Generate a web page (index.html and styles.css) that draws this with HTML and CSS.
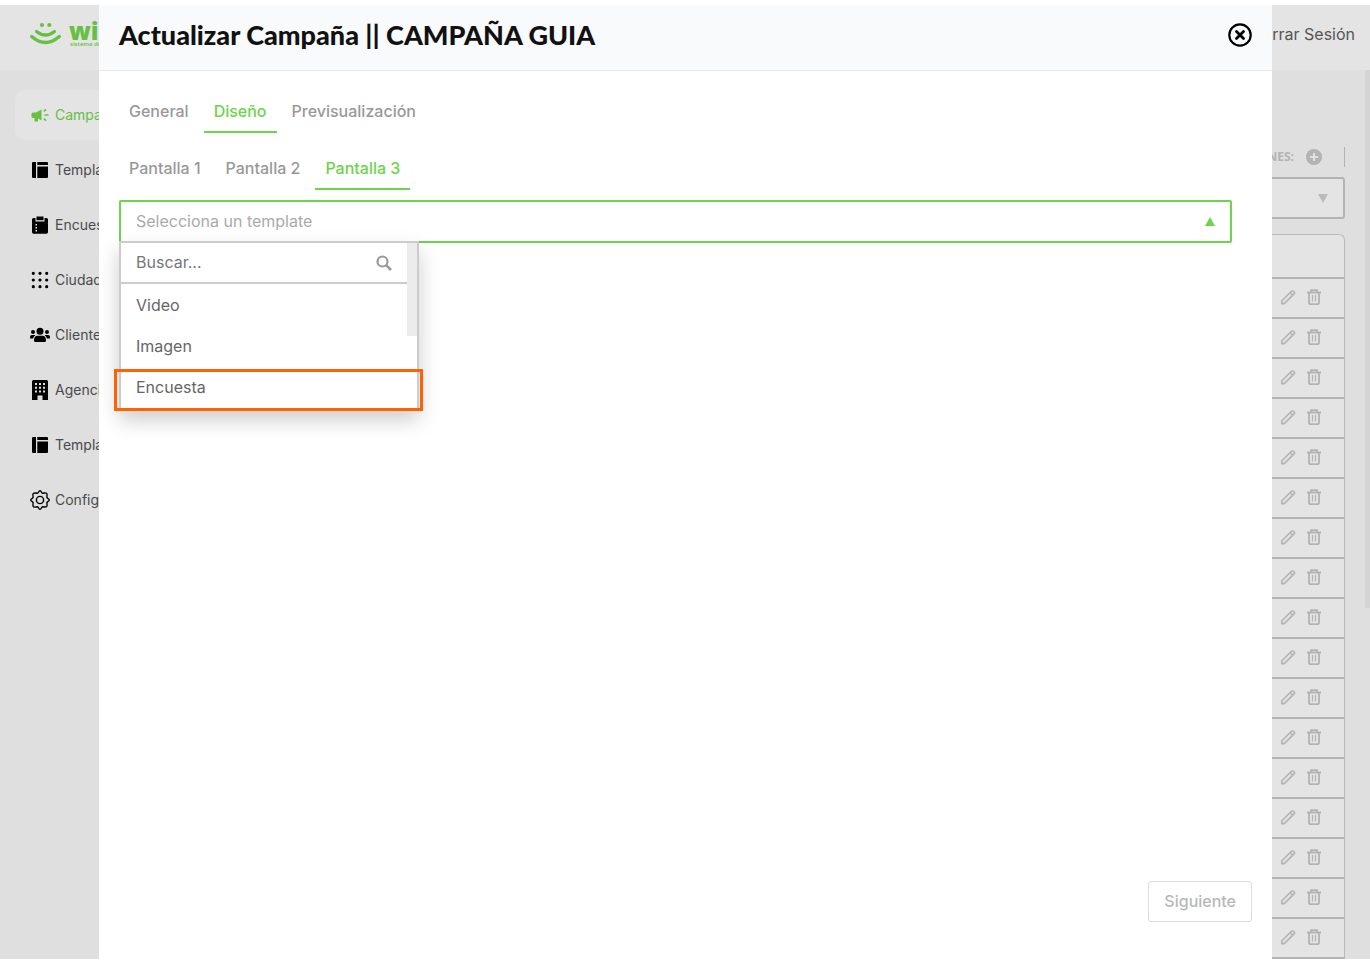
FILE: index.html
```html
<!DOCTYPE html>
<html lang="es">
<head>
<meta charset="utf-8">
<title>Actualizar Campaña</title>
<link rel="stylesheet" href="styles.css">
</head>
<body>
<svg class="sprite" aria-hidden="true">
  <symbol id="i-template" viewBox="0 0 20 20"><path d="M2 3Q2 2 3 2H6V18H3Q2 18 2 17ZM7.300 2H17Q18 2 18 3V5H7.300ZM7.300 6.500H18V17Q18 18 17 18H7.300Z"/></symbol>
  <symbol id="i-pencil" viewBox="0 0 16 16"><path d="M1.700 14.600V12L11.700 2Q12.300 1.400 12.900 2L14.300 3.400Q14.900 4 14.300 4.600L4.300 14.600ZM10 3.700L12.600 6.300" fill="none" stroke="currentColor" stroke-width="1.600" stroke-linejoin="round"/></symbol>
  <symbol id="i-trash" viewBox="0 0 16 16"><path d="M1 3.500H15M5 3V1.200H11V3M3 3.500V13.500Q3 15.200 4.700 15.200H11.300Q13 15.200 13 13.500V3.500" fill="none" stroke="currentColor" stroke-width="1.800"/><path d="M6.500 6V12.500M9.500 6V12.500" stroke="currentColor" stroke-width="1.200"/></symbol>
</svg>
<div class="app">
  <header class="topbar">
    <div class="logo">
      <svg width="32" height="24" viewBox="0 0 32 24" fill="none" stroke="currentColor" stroke-linecap="round"><circle cx="12" cy="3" r="2.100" fill="currentColor" stroke="none"/><circle cx="19.300" cy="3" r="2.100" fill="currentColor" stroke="none"/><path d="M6.500 9.500Q15.500 16.500 24.500 9.500" stroke-width="3.200"/><path d="M1.700 14.500Q15.500 26.500 29.300 14.500" stroke-width="3.400"/></svg>
      <div class="brand"><span class="brand-name">wi</span><span class="brand-sub">sistema de</span></div>
    </div>
    <a class="logout" href="#">Cerrar Sesión</a>
  </header>
  <div class="body">
    <nav class="sidebar">
      <a class="item active" href="#"><svg viewBox="0 0 20 20"><path d="M11.500 4.500V15.500L8 13.500V16.500H4.500V13H3Q1.500 13 1.500 11.500V9Q1.500 7.500 3 7.500H6Z"/><path d="M13.800 6.500L16 4.300M14.500 10H18.500M13.800 13.500L16 15.700" fill="none" stroke="currentColor" stroke-width="1.700"/></svg>Campañas</a>
      <a class="item" href="#"><svg viewBox="0 0 20 20"><use href="#i-template"/></svg>Templates</a>
      <a class="item" href="#"><svg viewBox="0 0 20 20"><path fill-rule="evenodd" d="M3.500 3H5.500V6.500H14.500V3H16.500Q18 3 18 4.500V17Q18 18.700 16.500 18.700H3.500Q2 18.700 2 17V4.500Q2 3 3.500 3ZM5.500 9V10.500H7V9ZM5.500 12V13.500H7V12ZM5.500 15V16.500H7V15Z"/><path d="M6.500 1.500H13.500V5.200H6.500Z"/></svg>Encuestas</a>
      <a class="item" href="#"><svg viewBox="0 0 20 20"><path d="M3.300 3.300h0M10 3.300h0M16.700 3.300h0M3.300 10h0M10 10h0M16.700 10h0M3.300 16.700h0M10 16.700h0M16.700 16.700h0" fill="none" stroke="currentColor" stroke-width="3.200" stroke-linecap="round"/></svg>Ciudades</a>
      <a class="item" href="#"><svg viewBox="0 0 20 20"><circle cx="10" cy="6.300" r="3.500"/><circle cx="3" cy="7" r="2"/><circle cx="17" cy="7" r="2"/><path d="M4 15.500Q4 10.800 7.500 10.800H12.500Q16 10.800 16 15.500Q16 17 14.500 17H5.500Q4 17 4 15.500ZM0 12Q0 10 2 10H4.500L5.300 10.600Q3.400 11.500 3.100 13.500H0ZM20 12Q20 10 18 10H15.500L14.700 10.600Q16.600 11.500 16.900 13.500H20Z"/></svg>Clientes</a>
      <a class="item" href="#"><svg viewBox="0 0 20 20"><path fill-rule="evenodd" d="M3.500 0H16.500Q18 0 18 1.500V20H12.500V15.500H7.500V20H2V1.500Q2 0 3.500 0ZM5 3V5H7V3ZM9 3V5H11V3ZM13 3V5H15V3ZM5 6.800V8.800H7V6.800ZM9 6.800V8.800H11V6.800ZM13 6.800V8.800H15V6.800ZM5 10.600V12.600H7V10.600ZM9 10.600V12.600H11V10.600ZM13 10.600V12.600H15V10.600Z"/></svg>Agencias</a>
      <a class="item" href="#"><svg viewBox="0 0 20 20"><use href="#i-template"/></svg>Templates</a>
      <a class="item" href="#"><svg viewBox="0 0 20 20" fill="none" stroke="currentColor" stroke-width="1.400"><circle cx="10" cy="10" r="3.600"/><path stroke-linejoin="round" d="M8.400 2.300Q10 -.8 11.600 2.300Q12.500 3.700 14 3Q17.500 2.200 17 6Q16.300 7.500 17.700 8.400Q20.800 10 17.700 11.600Q16.300 12.500 17 14Q17.800 17.500 14 17Q12.500 16.300 11.600 17.700Q10 20.800 8.400 17.700Q7.500 16.300 6 17Q2.500 17.800 3 14Q3.700 12.500 2.300 11.600Q-.8 10 2.300 8.400Q3.700 7.500 3 6Q2.200 2.500 6 3Q7.500 3.700 8.400 2.300Z"/></svg>Configuración</a>
    </nav>
    <main class="content">
      <div class="toolbar"><span>ACCIONES:</span><button class="add" aria-label="Agregar"><svg width="16" height="16" viewBox="0 0 16 16"><circle cx="8" cy="8" r="8" fill="currentColor"/><path d="M8 4V12M4 8H12" stroke="#e0e0e0" stroke-width="2"/></svg></button></div>
      <div class="filter"><select aria-label="Filtro"><option></option></select><svg width="10" height="9" viewBox="0 0 10 9"><path d="M0 0H10L5 9Z"/></svg></div>
      <table class="grid">
        <thead><tr><th></th></tr></thead>
        <tbody id="rows"></tbody>
      </table>
    </main>
    <div class="scroll"><div class="thumb"></div></div>
  </div>

  <section class="modal" role="dialog" aria-labelledby="title">
    <header class="modal-head">
      <h1 id="title">Actualizar Campaña || CAMPAÑA GUIA</h1>
      <button class="close" aria-label="Cerrar"><svg width="24" height="24" viewBox="0 0 24 24" fill="none" stroke="currentColor"><circle cx="12" cy="12" r="10.700" stroke-width="2.200"/><path d="M8.500 8.500L15.500 15.500M15.500 8.500L8.500 15.500" stroke-width="2.800" stroke-linecap="round"/></svg></button>
    </header>
    <div class="modal-body">
      <div class="tabs" role="tablist">
        <button role="tab">General</button><button role="tab" class="on" aria-selected="true">Diseño</button><button role="tab">Previsualización</button>
      </div>
      <div class="tabs" role="tablist">
        <button role="tab">Pantalla 1</button><button role="tab">Pantalla 2</button><button role="tab" class="on" aria-selected="true">Pantalla 3</button>
      </div>
      <div class="picker">
        <select aria-label="Template"><option>Selecciona un template</option></select>
        <svg class="caret" width="10" height="9" viewBox="0 0 10 9"><path d="M0 9H10L5 0Z"/></svg>
        <div class="menu">
          <div class="menu-search">
            <input type="text" placeholder="Buscar..." aria-label="Buscar">
            <svg width="16" height="16" viewBox="0 0 16 16" fill="none" stroke="currentColor"><circle cx="6.500" cy="6.500" r="5" stroke-width="2.200"/><path d="M10.200 10.200L15 15" stroke-width="2.600"/></svg>
          </div>
          <ul role="listbox" aria-label="Templates">
            <li role="option">Video</li>
            <li role="option">Imagen</li>
            <li role="option" class="marked">Encuesta</li>
          </ul>
          <div class="menu-thumb"></div>
        </div>
      </div>
    </div>
    <footer class="modal-foot"><button class="next" disabled>Siguiente</button></footer>
  </section>
</div>
<script src="app.js"></script>
</body>
</html>
```
FILE: styles.css
```css
* { box-sizing: border-box; }
body { margin: 0; padding: 5px 0 4px; background: #fff; font-family: Inter, "Liberation Sans", sans-serif; font-size: 16px; color: #4f4f4f; }
button, select, input { font: inherit; color: inherit; background: none; border: 0; padding: 0; margin: 0; }
a { color: inherit; text-decoration: none; }
.sprite { display: none; }

.app { position: relative; display: flex; flex-direction: column; height: calc(100vh - 9px); overflow: hidden; background: #dfdfdf; }
.topbar { display: flex; justify-content: space-between; align-items: center; flex: 0 0 65px; padding: 0 15px 7px 30px; background: #e4e4e4; }
.logo { display: flex; align-items: center; gap: 7px; color: #65c043; }
.brand { display: flex; flex-direction: column; }
.brand-name { font: 800 24px/20px "Open Sans", sans-serif; }
.brand-sub { font: 600 6px/6px "Open Sans", sans-serif; padding-left: 1px; }
.logout { color: #555; }

.body { display: flex; flex: 1; min-height: 0; }
.sidebar { display: flex; flex-direction: column; gap: 5px; width: 250px; padding: 20px 15px; }
.item { display: flex; align-items: center; gap: 5px; height: 50px; padding: 0 15px; border-radius: 10px; font-size: 14px; line-height: 18px; color: #4a4a4a; }
.item svg { width: 20px; height: 20px; color: #000; fill: currentColor; flex: none; }
.item svg[fill="none"] { fill: none; }
.item.active, .item.active svg { color: #65c043; }
.item.active { background: #e4e4e4; }

.content { display: flex; flex-direction: column; flex: 1; padding: 77px 20px 0; color: #b3b3b3; }
.toolbar { display: flex; justify-content: flex-end; align-items: center; gap: 12px; height: 20px; padding-right: 22px; border-right: 1px solid #b3b3b3; font: 700 12px/20px "Open Sans", sans-serif; }
.add { display: flex; }
.filter { display: flex; align-items: center; height: 42px; margin: 10px 0 15px; padding-right: 15px; border: 2px solid #b3b3b3; border-radius: 3px; background: #e4e4e4; }
.filter select { flex: 1; appearance: none; }
.filter svg { fill: #bbb; }
.grid { width: 100%; border: 1px solid #b9b9b9; border-bottom: 0; border-radius: 6px 6px 0 0; border-spacing: 0; background: #e4e4e4; }
.grid th { height: 44px; padding: 0; border-bottom: 2px solid #b3b3b3; }
.grid td { height: 40px; padding: 0 22px 2px 0; border-bottom: 2px solid #b3b3b3; }
.actions { display: flex; justify-content: flex-end; gap: 10px; }
.actions button, .actions svg { display: block; width: 16px; height: 16px; }
.scroll { flex: 0 0 5px; }
.thumb { height: 60.5%; background: #d4d4d4; }

.modal { position: absolute; inset: 0 98px 0 99px; display: flex; flex-direction: column; background: #fff; }
.modal-head { display: flex; justify-content: space-between; align-items: center; flex: 0 0 66px; padding: 0 20px 6px; border-bottom: 1px solid #e8e8e8; background: #f9fafc; }
.modal-head h1 { margin: 0; font: 900 27px/36px Lato, sans-serif; color: #111; }
.close { display: flex; color: #000; }
.modal-body { display: flex; flex-direction: column; flex: 1; padding: 19px 40px 0 20px; }
.tabs { display: flex; gap: 5px; margin-bottom: 14px; }
.tabs + .picker { margin-top: -4px; }
.tabs button { height: 43px; padding: 0 10px; border-bottom: 2px solid transparent; font-weight: 500; color: #999; }
.tabs .on { color: #6dd44b; border-color: #6dd44b; }

.picker { position: relative; display: flex; align-items: center; height: 43px; padding: 0 15px; border: 2px solid #6dd44b; border-radius: 2px; }
.picker select { flex: 1; appearance: none; padding-bottom: 2px; color: #aaa; outline: 0; }
.caret { fill: #6dd44b; }
.menu { position: absolute; top: 39px; left: -2px; width: 300px; border: 2px solid #ccc; background: #fff; color: #666; box-shadow: 0 10px 20px rgba(0, 0, 0, .2); }
.menu-search { display: flex; align-items: center; height: 41px; margin-right: 10px; padding: 0 15px; border-bottom: 2px solid #ccc; color: #999; }
.menu-search input { flex: 1; min-width: 0; padding-bottom: 2px; }
.menu-search input::placeholder { color: #777; opacity: 1; }
.menu ul { list-style: none; margin: 0; padding: 1px 0 0; }
.menu li { padding: 0 15px; line-height: 41px; }
.marked { position: relative; }
.marked::after { content: ""; position: absolute; inset: 2px -6px -3px -7px; border: 3px solid #ff6200; }
.menu-thumb { position: absolute; top: 0; right: 0; width: 10px; height: 93px; background: #ececec; }

.modal-foot { display: flex; justify-content: flex-end; padding: 0 20px 37px; }
.next { height: 41px; padding: 0 15px 2px; border: 1px solid #ddd; border-radius: 3px; font-weight: 500; color: #b8b8b8; }
```
FILE: app.js
```js
const row = '<tr><td><div class="actions">' +
  '<button aria-label="Editar"><svg><use href="#i-pencil"/></svg></button>' +
  '<button aria-label="Eliminar"><svg><use href="#i-trash"/></svg></button>' +
  '</div></td></tr>';
document.getElementById('rows').innerHTML = row.repeat(17);
```
